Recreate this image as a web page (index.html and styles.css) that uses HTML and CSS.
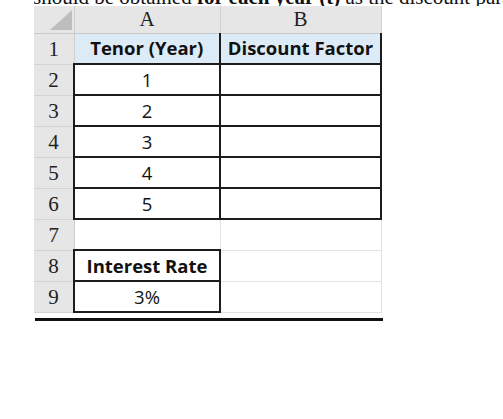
FILE: index.html
```html
<!DOCTYPE html>
<html>
<head>
<meta charset="utf-8">
<link rel="stylesheet" href="styles.css">
</head>
<body>
<div class="page">
  <div class="cut"><span class="cut-text">should be obtained <b>for each year (t)</b> as the discount parameter</span></div>
  <table class="sheet">
    <colgroup><col class="c-rh"><col class="c-a"><col class="c-b"></colgroup>
    <tr class="hdr">
      <th class="corner"><svg width="22" height="20" viewBox="0 0 22 20"><polygon points="22,0 22,20 0,20" fill="#bdbdbd"/></svg></th>
      <th class="colh">A</th>
      <th class="colh">B</th>
    </tr>
    <tr class="r1">
      <th class="rh">1</th>
      <td class="bx hd">Tenor (Year)</td>
      <td class="bx hd">Discount Factor</td>
    </tr>
    <tr><th class="rh">2</th><td class="bx">1</td><td class="bx"></td></tr>
    <tr><th class="rh">3</th><td class="bx">2</td><td class="bx"></td></tr>
    <tr><th class="rh">4</th><td class="bx">3</td><td class="bx"></td></tr>
    <tr><th class="rh">5</th><td class="bx">4</td><td class="bx"></td></tr>
    <tr><th class="rh">6</th><td class="bx">5</td><td class="bx"></td></tr>
    <tr><th class="rh">7</th><td class="gl"></td><td class="gl"></td></tr>
    <tr><th class="rh">8</th><td class="bx bold">Interest Rate</td><td class="gl"></td></tr>
    <tr><th class="rh">9</th><td class="bx">3%</td><td class="gl"></td></tr>
  </table>
  <div class="rule"></div>
</div>
</body>
</html>
```

FILE: styles.css
```css
html, body {
  margin: 0;
  padding: 0;
  background: #ffffff;
}
.page {
  padding-left: 34px;
}
.cut {
  height: 6px;
  width: 469px;
  overflow: hidden;
}
.cut-text {
  display: block;
  white-space: nowrap;
  font-family: "Liberation Serif", serif;
  font-size: 21px;
  line-height: 24px;
  margin-top: -15px;
  margin-left: -1px;
  color: #111;
}
.sheet {
  border-collapse: collapse;
  table-layout: fixed;
  width: 347px;
}
.c-rh { width: 40px; }
.c-a { width: 146px; }
.c-b { width: 161px; }
.sheet th, .sheet td {
  padding: 0;
  text-align: center;
  vertical-align: middle;
  line-height: 20px;
  box-sizing: border-box;
}
.sheet tr.hdr {
  height: 27px;
}
.hdr th {
  height: 27px;
  background: #e6e6e6;
  font-family: "Liberation Serif", serif;
  font-weight: normal;
  font-size: 21px;
  color: #222;
  border-right: 1px solid #d2d2d2;
  border-bottom: 1px solid #c8c8c8;
}
.corner {
  text-align: right !important;
  vertical-align: bottom !important;
  line-height: 0 !important;
}
.corner svg {
  display: block;
  margin: 0 2px 3px auto;
}
.sheet tr {
  height: 31px;
}
.sheet tr td, .sheet tr .rh {
  height: 31px;
}
.rh {
  background: #e6e6e6;
  font-family: "Liberation Serif", serif;
  font-weight: normal;
  font-size: 21px;
  color: #222;
  border-bottom: 1px solid #d4d4d4;
  border-right: 1px solid #cfcfcf;
}
.sheet td {
  font-family: "Open Sans", "Lato", sans-serif;
  font-size: 18.5px;
  color: #111;
}
.bx {
  border: 2px solid #1c1c1c;
}
.r1 td {
  background: #ddebf7;
  border-top: 1px solid #c8c8c8;
}
.r1 td:first-of-type {
  border-left: 1px solid #c8c8c8;
}
.hd, .bold {
  font-weight: bold;
}
.gl {
  border: 1px solid #e2e2e2;
}
.rule {
  height: 3px;
  background: #111;
  margin-top: 5px;
  margin-left: 1px;
  width: 348px;
}
```
